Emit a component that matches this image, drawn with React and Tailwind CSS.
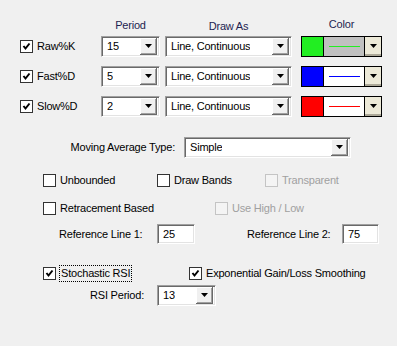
import React from "react";

const font = { fontFamily: '"Liberation Sans", Arial, sans-serif' };

const Arrow = () => (
  <svg width="7" height="4" viewBox="0 0 7 4">
    <polygon points="0,0 7,0 3.5,4" fill="#000" />
  </svg>
);

const Check = ({ checked, disabled, label, focus }) => (
  <div className="flex items-center gap-[4px] h-[13px]">
    <div
      className={
        "w-[13px] h-[13px] shrink-0 border flex items-center justify-center " +
        (disabled ? "border-[#c4c4c4] bg-[#f4f4f4]" : "border-[#333] bg-white")
      }
    >
      {checked && (
        <svg width="9" height="9" viewBox="0 0 9 9">
          <polyline points="1.5,4 3.5,6.5 7.5,1.5" fill="none" stroke="#000" strokeWidth="2" />
        </svg>
      )}
    </div>
    <span
      className={
        "whitespace-nowrap leading-[15px] " +
        (disabled ? "text-[#a0a0a0]" : "text-black") +
        (focus ? " outline outline-1 outline-dotted outline-black px-[1px]" : "")
      }
    >
      {label}
    </span>
  </div>
);

const Combo = ({ value, width }) => (
  <div
    className="h-[21px] bg-white border border-t-[#a0a0a0] border-l-[#a0a0a0] border-b-white border-r-white shadow-[inset_1px_1px_0_#696969,inset_-1px_-1px_0_#e3e3e3] flex items-center justify-between pl-[5px] pr-[2px]"
    style={{ width }}
  >
    <span className="text-black whitespace-nowrap overflow-hidden">{value}</span>
    <div className="w-[17px] h-[17px] shrink-0 bg-[#f0f0f0] border-r border-b border-r-[#696969] border-b-[#696969] shadow-[inset_1px_1px_0_#fff,inset_-1px_-1px_0_#a0a0a0] flex items-center justify-center">
      <Arrow />
    </div>
  </div>
);

const ColorBox = ({ color, bg }) => (
  <div className="w-[81px] h-[21px] border border-black flex">
    <div className="w-[22px] h-full border-r border-black" style={{ background: color }} />
    <div className="w-[41px] h-full flex items-center justify-center border-r border-black" style={{ background: bg }}>
      <div className="w-[31px] h-px" style={{ background: color }} />
    </div>
    <div className="flex-1 bg-[#ece9d8] flex items-center justify-center border-b-2 border-b-[#aca899]">
      <Arrow />
    </div>
  </div>
);

const TextBox = ({ value, width }) => (
  <div
    className="h-[20px] bg-white border border-t-[#a0a0a0] border-l-[#a0a0a0] border-b-white border-r-white shadow-[inset_1px_1px_0_#696969,inset_-1px_-1px_0_#e3e3e3] flex items-center pl-[5px]"
    style={{ width }}
  >
    {value}
  </div>
);

const rows = [
  { label: "Raw%K", period: "15", color: "#22ee22", bg: "#c0c0c0" },
  { label: "Fast%D", period: "5", color: "#0000ff", bg: "#ffffff" },
  { label: "Slow%D", period: "2", color: "#ff0000", bg: "#ffffff" },
];

export default function App() {
  return (
    <div className="w-[397px] h-[346px] bg-[#f0f0f0] text-[11px] tracking-[-0.2px] text-black overflow-hidden" style={font}>
      <div className="flex pl-[101px] pt-[17px] h-[31px]">
        <div className="w-[59px] text-center text-[#1e1e50]">Period</div>
        <div className="w-[127px] ml-[5px] text-center text-[#1e1e50] pt-[1px]">Draw As</div>
        <div className="w-[81px] ml-[9px] text-center text-[#1e1e50] -mt-[1px]">Color</div>
      </div>

      <div className="flex flex-col gap-[9px] mt-[5px]">
        {rows.map((r) => (
          <div key={r.label} className="flex items-center h-[21px]">
            <div className="w-[101px] pl-[20px]">
              <Check checked label={r.label} />
            </div>
            <Combo value={r.period} width={59} />
            <div className="ml-[5px]">
              <Combo value="Line, Continuous" width={127} />
            </div>
            <div className="ml-[9px]">
              <ColorBox color={r.color} bg={r.bg} />
            </div>
          </div>
        ))}
      </div>

      <div className="flex items-center mt-[20px] h-[21px]">
        <div className="w-[175px] text-right">Moving Average Type:</div>
        <div className="ml-[9px]">
          <Combo value="Simple" width={167} />
        </div>
      </div>

      <div className="flex items-center pl-[43px] mt-[16px]">
        <div className="w-[114px]">
          <Check label="Unbounded" />
        </div>
        <div className="w-[108px]">
          <Check label="Draw Bands" />
        </div>
        <Check label="Transparent" disabled />
      </div>

      <div className="flex items-center pl-[43px] mt-[15px]">
        <div className="w-[172px]">
          <Check label="Retracement Based" />
        </div>
        <Check label="Use High / Low" disabled />
      </div>

      <div className="flex items-center pl-[59px] mt-[9px] h-[20px]">
        <div className="w-[98px]">Reference Line 1:</div>
        <TextBox value="25" width={38} />
        <div className="w-[95px] ml-[52px]">Reference Line 2:</div>
        <TextBox value="75" width={37} />
      </div>

      <div className="flex items-center pl-[43px] mt-[23px]">
        <div className="w-[146px]">
          <Check checked label="Stochastic RSI" focus />
        </div>
        <Check checked label="Exponential Gain/Loss Smoothing" />
      </div>

      <div className="flex items-center pl-[90px] mt-[5px]">
        <div className="w-[67px]">RSI Period:</div>
        <Combo value="13" width={59} />
      </div>
    </div>
  );
}
